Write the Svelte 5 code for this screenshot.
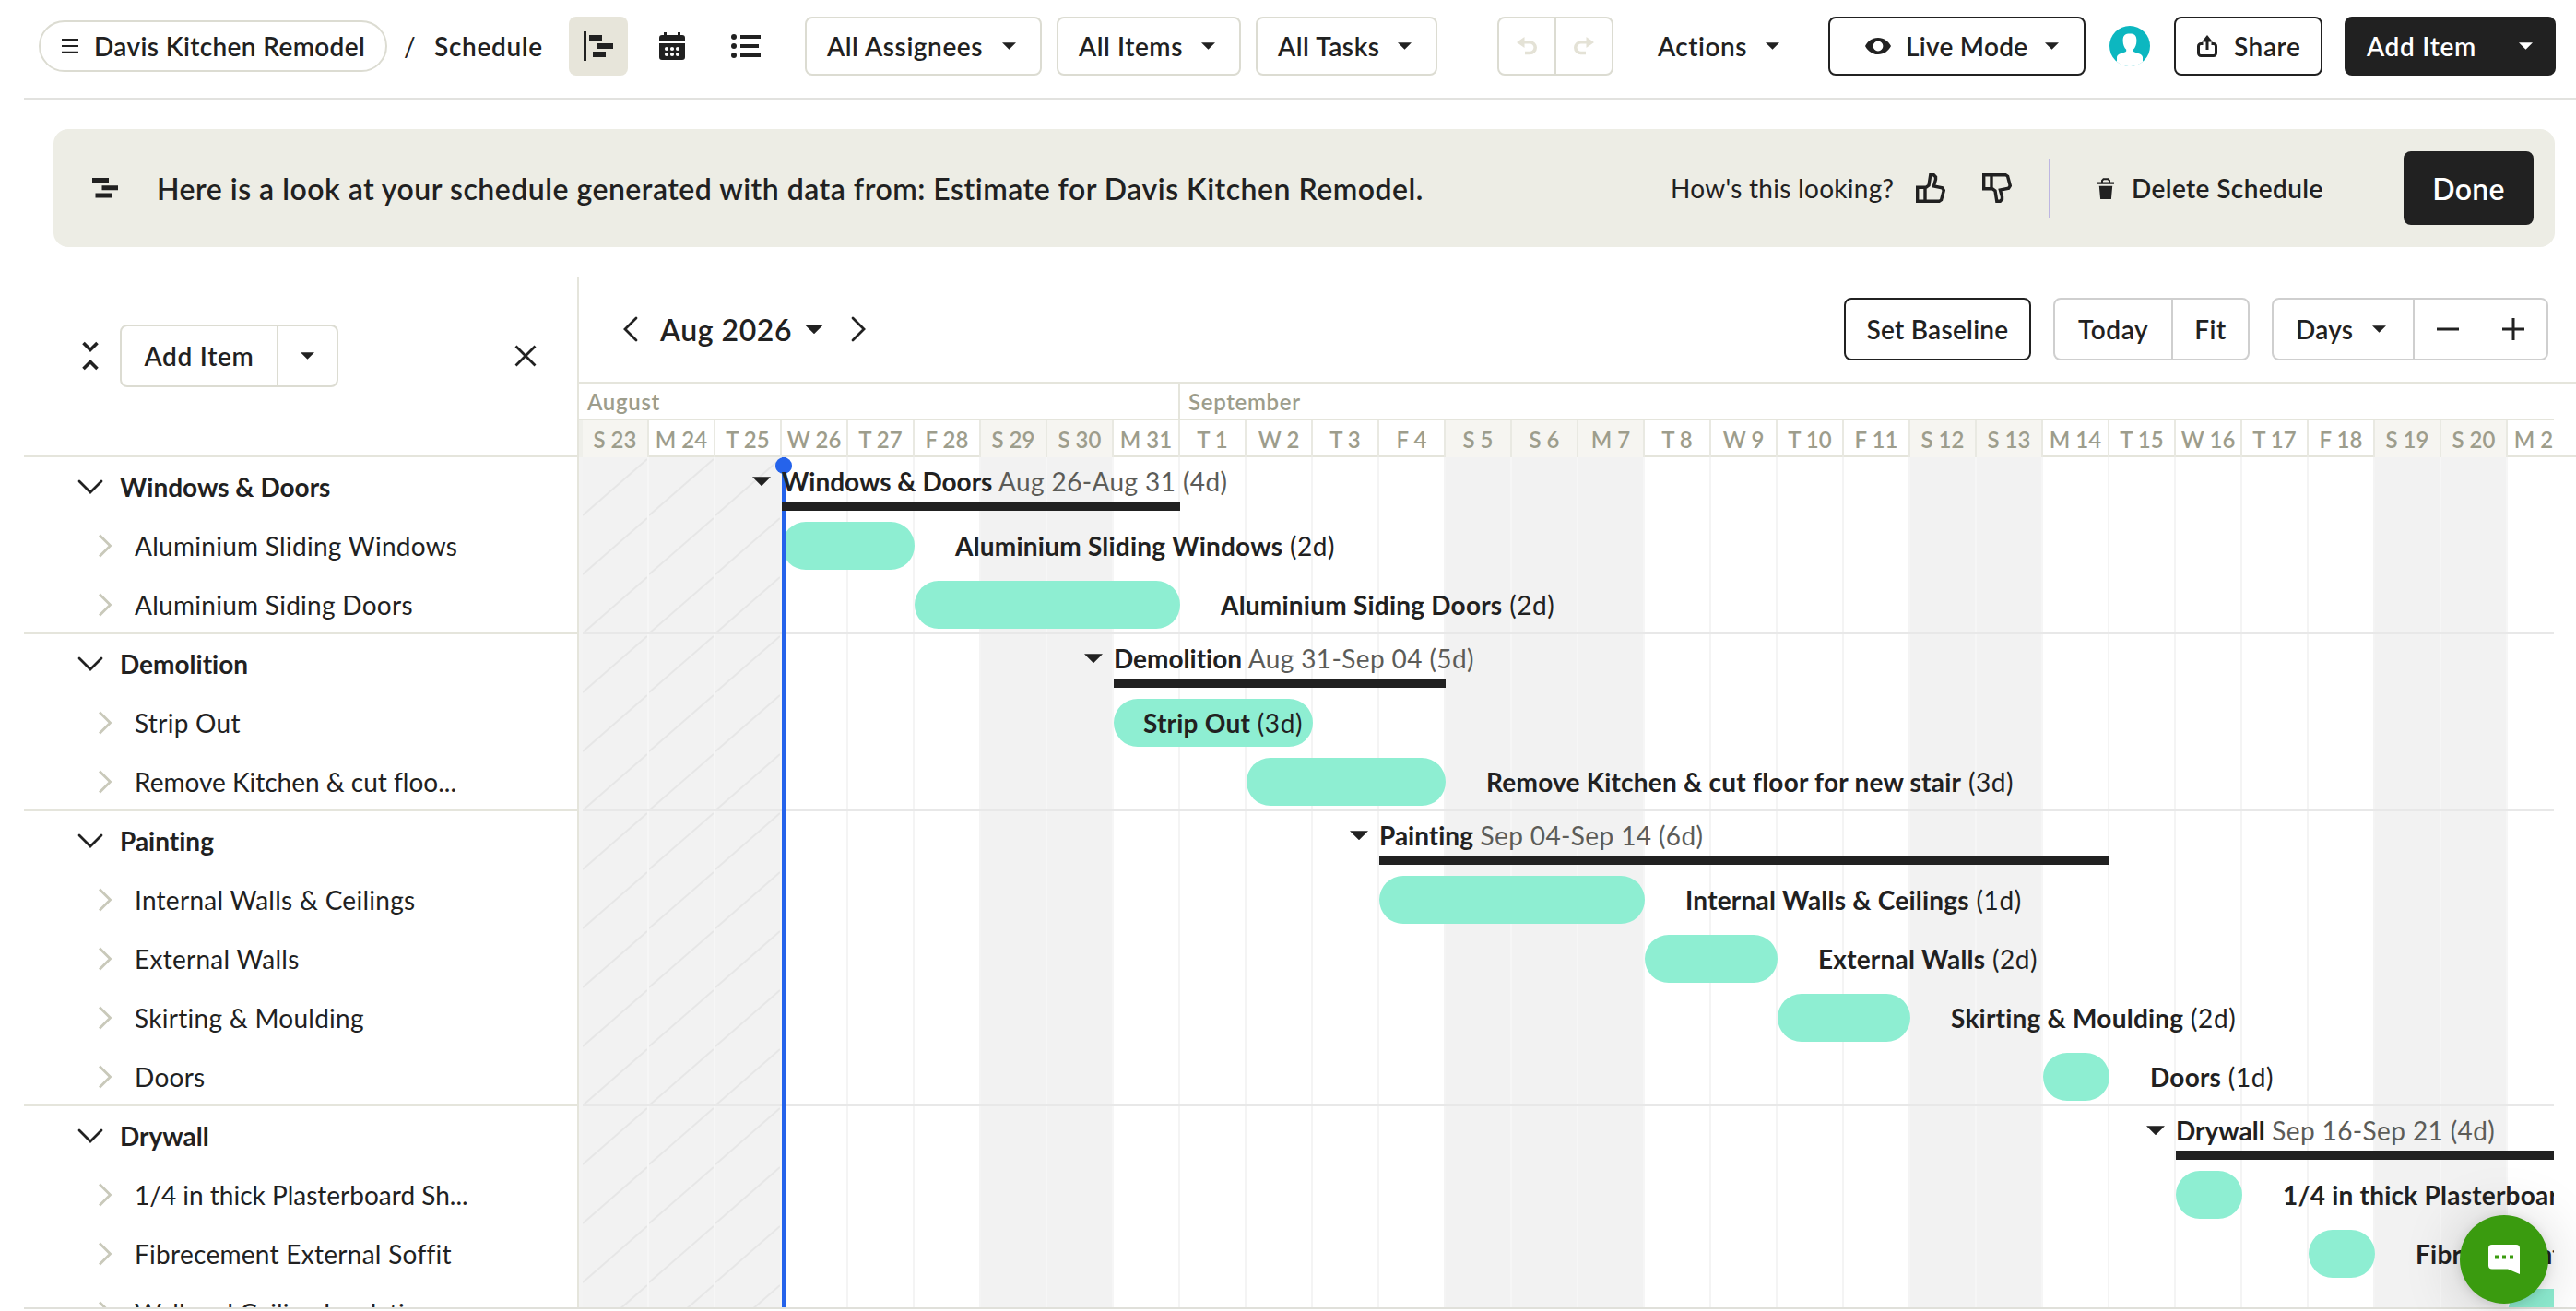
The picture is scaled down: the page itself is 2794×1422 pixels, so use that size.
<script lang="ts">
  type Task = { name: string; short?: string; start: number; end: number; days: number; inside?: boolean };
  type Group = { name: string; range: string; start: number; end: number; tasks: Task[] };

  const DAY = 72;

  // start / end are column indexes, counted from Sunday Aug 23
  const groups: Group[] = [
    {
      name: "Windows & Doors",
      range: "Aug 26-Aug 31 (4d)",
      start: 3,
      end: 9,
      tasks: [
        { name: "Aluminium Sliding Windows", start: 3, end: 5, days: 2 },
        { name: "Aluminium Siding Doors", start: 5, end: 9, days: 2 },
      ],
    },
    {
      name: "Demolition",
      range: "Aug 31-Sep 04 (5d)",
      start: 8,
      end: 13,
      tasks: [
        { name: "Strip Out", start: 8, end: 11, days: 3, inside: true },
        {
          name: "Remove Kitchen & cut floor for new stair",
          short: "Remove Kitchen & cut floo...",
          start: 10,
          end: 13,
          days: 3,
        },
      ],
    },
    {
      name: "Painting",
      range: "Sep 04-Sep 14 (6d)",
      start: 12,
      end: 23,
      tasks: [
        { name: "Internal Walls & Ceilings", start: 12, end: 16, days: 1 },
        { name: "External Walls", start: 16, end: 18, days: 2 },
        { name: "Skirting & Moulding", start: 18, end: 20, days: 2 },
        { name: "Doors", start: 22, end: 23, days: 1 },
      ],
    },
    {
      name: "Drywall",
      range: "Sep 16-Sep 21 (4d)",
      start: 24,
      end: 30,
      tasks: [
        {
          name: "1/4 in thick Plasterboard Sheets",
          short: "1/4 in thick Plasterboard Sh...",
          start: 24,
          end: 25,
          days: 1,
        },
        { name: "Fibrecement External Soffit", start: 26, end: 27, days: 1 },
        {
          name: "Wall and Ceiling Insulation",
          short: "Wall and Ceiling Insulati...",
          start: 29,
          end: 31,
          days: 1,
        },
      ],
    },
  ];

  const todayIndex = 3;
  const daysOff = [0, 6, 7, 13, 14, 15, 20, 21, 27, 28];
  const letters = ["S", "M", "T", "W", "T", "F", "S"];

  const columns = Array.from({ length: 30 }, (_, i) => {
    const date = 23 + i;
    return {
      label: `${letters[i % 7]} ${date > 31 ? date - 31 : date}`,
      off: daysOff.includes(i),
      past: i < todayIndex,
    };
  });

  const filters = [
    { label: "All Assignees", width: 257 },
    { label: "All Items", width: 200 },
    { label: "All Tasks", width: 197 },
  ];
</script>

{#snippet caret(size = 15)}
  <svg class="caret" width={size} height={size / 2 + 0.5} viewBox="0 0 16 8"><path d="M0 0h16L8 8z" fill="currentColor" /></svg>
{/snippet}

<div class="app">
  <header class="topbar">
    <button class="project">
      <svg width="18" height="16" viewBox="0 0 18 16"><path d="M0 1.2h18M0 8h18M0 14.8h18" stroke="currentColor" stroke-width="2.2" /></svg>
      <span>Davis Kitchen Remodel</span>
    </button>
    <span class="slash">/</span>
    <span class="crumb">Schedule</span>

    <div class="views">
      <button class="view active" aria-label="Gantt">
        <svg width="32" height="32" viewBox="0 0 32 32" fill="currentColor">
          <path d="M0 0h3v32H0zM6 4h14v6H6zM14 13h18v6H14zM10 22h14v6H10z" />
        </svg>
      </button>
      <button class="view" aria-label="Calendar">
        <svg width="28" height="30" viewBox="0 0 28 30">
          <path fill="currentColor" d="M5 0h3v3h12V0h3v3h2a3 3 0 0 1 3 3v3H0V6a3 3 0 0 1 3-3h2zM0 12h28v15a3 3 0 0 1-3 3H3a3 3 0 0 1-3-3z" />
          <g fill="#fff">
            {#each [8, 14, 20] as cx}
              <circle {cx} cy="18" r="2.1" /><circle {cx} cy="24" r="2.1" />
            {/each}
          </g>
        </svg>
      </button>
      <button class="view" aria-label="List">
        <svg width="32" height="28" viewBox="0 0 32 28" fill="currentColor">
          <circle cx="3" cy="4" r="3" /><circle cx="3" cy="14" r="3" /><circle cx="3" cy="24" r="3" />
          <path d="M10 2h22v4H10zM10 12h20v4H10zM10 22h22v4H10z" />
        </svg>
      </button>
    </div>

    <div class="filters">
      {#each filters as f}
        <button class="btn filter" style="width: {f.width}px">{f.label}{@render caret()}</button>
      {/each}
    </div>

    <div class="split history">
      <button aria-label="Undo">
        <svg width="22" height="20" viewBox="0 0 22 20"><path d="M0 6 8.500 0v4.200h6a7.500 7.500 0 0 1 0 15H9v-3.400h5.200a4.200 4.200 0 0 0 0-8.400H8.500V12z" fill="currentColor" /></svg>
      </button>
      <button aria-label="Redo">
        <svg width="22" height="20" viewBox="0 0 22 20"><path d="M22 6 13.500 0v4.200h-6a7.500 7.500 0 0 0 0 15H13v-3.400H7.800a4.200 4.200 0 0 1 0-8.400h5.700V12z" fill="currentColor" /></svg>
      </button>
    </div>

    <button class="actions">Actions{@render caret()}</button>

    <button class="btn dark-line live">
      <svg width="28" height="18" viewBox="0 0 28 18">
        <path fill="currentColor" fill-rule="evenodd" d="M14 0c6.500 0 11.500 4 14 9-2.500 5-7.500 9-14 9S2.500 14 0 9C2.500 4 7.500 0 14 0zm0 3.600a5.400 5.400 0 1 0 0 10.800 5.400 5.400 0 0 0 0-10.800z" />
      </svg>
      <span>Live Mode</span>
      {@render caret()}
    </button>

    <svg class="avatar" width="44" height="44" viewBox="0 0 44 44">
      <circle cx="22" cy="22" r="22" fill="#0cb7c0" />
      <path fill="#fff" d="M22 8.500c4.800 0 7.600 1.800 7.400 8-.1 4.400-1.600 7.400-3.600 9.300v1.600c1 2 10.200 2.200 10.200 6.600v5a22 22 0 0 1-28 0v-5c0-4.400 9.200-4.600 10.200-6.600v-1.600c-2-1.900-3.500-4.900-3.600-9.300-.2-6.200 2.600-8 7.400-8z" />
    </svg>

    <button class="btn dark-line share">
      <svg width="22" height="24" viewBox="0 0 22 24">
        <path d="M6.500 9.500H4.200A2.700 2.700 0 0 0 1.500 12.200v7.600a2.700 2.700 0 0 0 2.700 2.700h13.600a2.700 2.700 0 0 0 2.700-2.700v-7.600a2.700 2.700 0 0 0-2.700-2.700h-2.300M11 16V5" fill="none" stroke="currentColor" stroke-width="3" />
        <path d="M11 0l6 7.500H5z" fill="currentColor" />
      </svg>
      <span>Share</span>
    </button>

    <button class="btn solid add">Add Item{@render caret()}</button>
  </header>

  <section class="banner">
    <svg width="28" height="22" viewBox="0 0 28 22" fill="currentColor"><path d="M0 0h18v5H0zM10.500 8.300H28v5H10.500zM3.500 16.500h18v5h-18z" /></svg>
    <p>Here is a look at your schedule generated with data from: Estimate for Davis Kitchen Remodel.</p>
    <span class="question">How's this looking?</span>
    <button class="thumb" aria-label="Looks good">
      <svg width="32" height="32" viewBox="0 0 32 32" fill="none" stroke="currentColor" stroke-width="3.400">
        <path d="M9.800 16.200 14 13 15.800 1.700h3.600L21.500 4v2.600L19.400 14l9.200 1.800 1.700 2.700-2.700 10.300-2.300 1.500H1.700V15.200h8.300v15.100" />
      </svg>
    </button>
    <button class="thumb down" aria-label="Looks wrong">
      <svg width="32" height="32" viewBox="0 0 32 32" fill="none" stroke="currentColor" stroke-width="3.400">
        <path d="M9.800 15.800 14 19l1.800 11.300h3.600L21.500 28v-2.600L19.400 18l9.200-1.800 1.700-2.700-2.700-10.300-2.300-1.500H1.700v15.100h8.300V1.700" />
      </svg>
    </button>
    <div class="rule"></div>
    <button class="delete">
      <svg width="18" height="23" viewBox="0 0 18 23">
        <path d="M0 4.500h18v2.200H0zM1.800 8.800h14.400L14.900 23H3.100z" fill="currentColor" />
        <path d="M5 5V2.800L6.500 1.200h5L13 2.800V5" fill="none" stroke="currentColor" stroke-width="2" />
      </svg>
      <span>Delete Schedule</span>
    </button>
    <button class="btn solid done">Done</button>
  </section>

  <main>
    <aside>
      <div class="side-head">
        <svg width="18" height="32" viewBox="0 0 18 32" fill="none" stroke="currentColor" stroke-width="3.600">
          <path d="M1.500 2 9 9.500 16.500 2M1.500 30 9 22.500l7.500 7.500" />
        </svg>
        <div class="split side-add">
          <button class="wide">Add Item</button>
          <button aria-label="More add options">{@render caret()}</button>
        </div>
        <button class="close" aria-label="Close panel">
          <svg width="24" height="24" viewBox="0 0 24 24"><path d="m1.500 1.500 21 21m0-21-21 21" stroke="currentColor" stroke-width="2.800" /></svg>
        </button>
      </div>
      {#each groups as g}
        <div class="side-group">
          <div class="side-row title">
            <svg width="28" height="16" viewBox="0 0 28 16"><path d="m2 2 12 12L26 2" fill="none" stroke="currentColor" stroke-width="2.800" stroke-linecap="round" /></svg>
            {g.name}
          </div>
          {#each g.tasks as t}
            <div class="side-row" class:tight={t.short}>
              <svg width="16" height="26" viewBox="0 0 16 26"><path d="m2 1.500 11.500 11.500L2 24.500" fill="none" stroke="#c9c9ba" stroke-width="2.800" /></svg>
              {t.short ?? t.name}
            </div>
          {/each}
        </div>
      {/each}
    </aside>

    <div class="chart">
      <div class="toolbar">
        <button class="nav" aria-label="Previous month">
          <svg width="16" height="28" viewBox="0 0 16 28"><path d="M14 2 2 14l12 12" fill="none" stroke="currentColor" stroke-width="2.800" stroke-linecap="round" /></svg>
        </button>
        <button class="month">Aug 2026{@render caret(20)}</button>
        <button class="nav" aria-label="Next month">
          <svg width="16" height="28" viewBox="0 0 16 28"><path d="m2 2 12 12L2 26" fill="none" stroke="currentColor" stroke-width="2.800" stroke-linecap="round" /></svg>
        </button>
        <button class="btn dark-line baseline">Set Baseline</button>
        <div class="split gray range">
          <button class="today">Today</button>
          <button>Fit</button>
        </div>
        <div class="split gray zoom">
          <button class="unit">Days{@render caret()}</button>
          <div class="steps">
            <svg width="24" height="24" viewBox="0 0 24 24"><path d="M0 12h24" stroke="currentColor" stroke-width="3" /></svg>
            <svg width="24" height="24" viewBox="0 0 24 24"><path d="M0 12h24M12 0v24" stroke="currentColor" stroke-width="3" /></svg>
          </div>
        </div>
      </div>

      <div class="months">
        <div class="month-cell first">August</div>
        <div class="month-cell">September</div>
      </div>
      <div class="days">
        <div class="clip">
          {#each columns as c}
            <div class="day" class:off={c.off}>{c.label}</div>
          {/each}
        </div>
      </div>

      <div class="canvas">
        <div class="grid">
          {#each columns as c}
            <div class="col" class:off={c.off || c.past}>
              {#if c.past}
                <svg width="70" height="922">
                  {#each Array.from({ length: 15 }, (_, r) => r * 64) as y}
                    <path d="M0 {y + 63} 70 {y + 2}" stroke="#e6e6e6" stroke-width="2" />
                  {/each}
                </svg>
              {/if}
            </div>
          {/each}
        </div>
        <div class="now" style="left: {4 + todayIndex * DAY}px"></div>

        {#each groups as g}
          <div class="group">
            <div class="row summary">
              <div class="caption" style="margin-left: {g.start * DAY - 32}px">
                {@render caret(20)}
                <span><b>{g.name}</b> {g.range}</span>
              </div>
              <div class="span" style="margin-left: {g.start * DAY}px; width: {(g.end - g.start) * DAY}px"></div>
            </div>
            {#each g.tasks as t}
              <div class="row">
                <div class="bar" style="margin-left: {t.start * DAY}px; width: {(t.end - t.start) * DAY}px">
                  {#if t.inside}<b>{t.name}</b>&nbsp;({t.days}d){/if}
                </div>
                {#if !t.inside}
                  <span class="label"><b>{t.name}</b> ({t.days}d)</span>
                {/if}
              </div>
            {/each}
          </div>
        {/each}
      </div>
    </div>
  </main>

  <button class="chat" aria-label="Open chat">
    <svg width="34" height="32" viewBox="0 0 34 32">
      <path d="M4 0h26a4 4 0 0 1 4 4v28l-13-5.500H4a4 4 0 0 1-4-4V4a4 4 0 0 1 4-4z" fill="#fff" />
      <path d="M7 11.500h4v4H7zM15 11.500h4v4h-4zM23 11.500h4v4h-4z" fill="#3a9b0f" />
    </svg>
  </button>
</div>

<style>
  :global(body) {
    margin: 0;
    background: #fff;
  }

  .app {
    position: relative;
    display: flex;
    flex-direction: column;
    width: 2794px;
    height: 1422px;
    overflow: hidden;
    box-sizing: border-box;
    font-family: Lato, "Open Sans", sans-serif;
    font-size: 28px;
    font-variant-ligatures: none;
    letter-spacing: 0.01em;
    color: #212121;
  }

  .app :global(*) {
    box-sizing: border-box;
  }

  svg {
    display: block;
    flex-shrink: 0;
  }

  b {
    font-weight: 700;
    letter-spacing: 0.008em;
  }

  button {
    display: flex;
    align-items: center;
    margin: 0;
    padding: 0;
    border: none;
    background: none;
    font: inherit;
    font-weight: 600;
    letter-spacing: inherit;
    color: inherit;
    text-align: left;
    white-space: nowrap;
    flex-shrink: 0;
    cursor: pointer;
  }

  /* top bar */
  .topbar {
    display: flex;
    align-items: center;
    flex-shrink: 0;
    height: 108px;
    margin-left: 26px;
    padding: 0 22px 6px 16px;
    border-bottom: 2px solid #e2e2df;
    font-weight: 600;
  }

  .project {
    width: 378px;
    height: 56px;
    padding-left: 23px;
    gap: 17px;
    border: 2px solid #dcdcd2;
    border-radius: 28px;
    letter-spacing: 0.013em;
  }

  .slash {
    width: 51px;
    padding-left: 18px;
    font-weight: 400;
  }

  .crumb {
    width: 146px;
    letter-spacing: 0.024em;
  }

  .views {
    display: flex;
    gap: 16px;
  }

  .view {
    justify-content: center;
    width: 64px;
    height: 64px;
    border-radius: 8px;
  }

  .view.active {
    background: #e7e5da;
  }

  .filters {
    display: flex;
    gap: 16px;
    margin-left: 32px;
    letter-spacing: 0.02em;
  }

  .btn {
    height: 64px;
    border: 2px solid #dcdcd2;
    border-radius: 8px;
  }

  .filter {
    justify-content: space-between;
    padding: 0 26px 0 22px;
  }

  .split {
    display: flex;
    border: 2px solid #dcdcd2;
    border-radius: 8px;
  }

  .split button {
    justify-content: center;
  }

  .split button:first-child {
    border-right: 2px solid #dcdcd2;
  }

  .history {
    width: 126px;
    height: 64px;
    margin-left: 65px;
    color: #e4e2d6;
  }

  .history button {
    flex: 1;
  }

  .actions {
    width: 132px;
    margin-left: 48px;
    justify-content: space-between;
    letter-spacing: 0.018em;
  }

  .dark-line {
    border-color: #212121;
  }

  .live {
    width: 279px;
    margin-left: 53px;
    padding: 0 27px 0 38px;
  }

  .live span {
    flex: 1;
    margin-left: 16px;
  }

  .avatar {
    margin: 0 26px;
  }

  .share {
    width: 161px;
    padding-left: 23px;
    gap: 18px;
    letter-spacing: 0.02em;
  }

  .solid {
    background: #212121;
    border-color: #212121;
    color: #fff;
  }

  .add {
    width: 229px;
    margin-left: 24px;
    padding: 0 23px 0 22px;
    justify-content: space-between;
    letter-spacing: 0.025em;
  }

  /* banner */
  .banner {
    display: flex;
    align-items: center;
    flex-shrink: 0;
    height: 128px;
    margin: 32px 23px 32px 58px;
    padding: 0 23px 0 42px;
    border-radius: 16px;
    background: #edede5;
  }

  .banner p {
    flex: 1;
    margin: 0 0 0 42px;
    font-size: 32px;
    font-weight: 600;
    letter-spacing: 0.5px;
    white-space: nowrap;
  }

  .question {
    width: 266px;
    white-space: nowrap;
  }

  .down {
    margin-left: 40px;
  }

  .rule {
    width: 2px;
    height: 64px;
    margin: 0 51px 0 40px;
    background: #bdb6e2;
  }

  .delete {
    width: 332px;
    gap: 19px;
    letter-spacing: 0.014em;
  }

  .done {
    width: 141px;
    height: 80px;
    justify-content: center;
    font-size: 32px;
  }

  /* item list */
  main {
    display: flex;
    height: 1120px;
    margin-left: 26px;
    overflow: hidden;
    flex-shrink: 0;
    border-bottom: 2px solid #e0e0da;
  }

  aside {
    width: 602px;
    flex-shrink: 0;
    border-right: 2px solid #e5e5dc;
  }

  .side-head {
    display: flex;
    align-items: center;
    height: 196px;
    padding: 0 44px 22px 63px;
    border-bottom: 2px solid #e5e5dc;
  }

  .side-add {
    width: 237px;
    height: 68px;
    margin: 0 auto 0 23px;
    letter-spacing: 0.025em;
  }

  .side-add button {
    flex: 1;
  }

  .side-add .wide {
    flex: none;
    width: 170px;
  }

  .side-group {
    box-shadow: inset 0 -2px #e5e5dc;
  }

  .side-row {
    display: flex;
    align-items: center;
    gap: 24px;
    height: 64px;
    padding-left: 80px;
    white-space: nowrap;
  }

  .side-row.tight {
    letter-spacing: 0;
  }

  .side-row.title {
    gap: 18px;
    padding-left: 58px;
    font-weight: 700;
    letter-spacing: 0;
  }

  /* chart */
  .chart {
    flex: 1;
    min-width: 0;
    display: flex;
    flex-direction: column;
  }

  .toolbar {
    display: flex;
    align-items: center;
    flex-shrink: 0;
    height: 116px;
    padding: 0 30px 0 48px;
    border-bottom: 2px solid #e5e5dc;
  }

  .month {
    justify-content: space-between;
    width: 177px;
    margin: 0 30px 0 24px;
    font-size: 32px;
    letter-spacing: 0.018em;
  }

  .baseline {
    justify-content: center;
    width: 203px;
    height: 68px;
    margin-left: auto;
  }

  .gray,
  .gray.split button:first-child {
    border-color: #cfcfcf;
  }

  .range,
  .zoom {
    height: 68px;
    margin-left: 24px;
  }

  .range {
    width: 213px;
    letter-spacing: 0.02em;
  }

  .range button {
    flex: 1;
  }

  .range .today {
    flex: none;
    width: 128px;
  }

  .zoom {
    width: 300px;
  }

  .zoom .unit {
    width: 153px;
    padding: 0 29px 0 24px;
    justify-content: space-between;
  }

  .steps {
    flex: 1;
    display: flex;
    align-items: center;
    justify-content: space-between;
    padding: 0 24px;
  }

  .months {
    display: flex;
    height: 40px;
    width: 2142px;
    flex-shrink: 0;
    border-bottom: 2px solid #e5e5dc;
    font-size: 24px;
    letter-spacing: 0.028em;
    font-weight: 600;
    color: #9d9d8c;
  }

  .month-cell {
    display: flex;
    align-items: center;
    padding-left: 9px;
  }

  .month-cell.first {
    width: 652px;
    border-right: 2px solid #e5e5dc;
  }

  .days {
    height: 40px;
    flex-shrink: 0;
    background: linear-gradient(#e5e5dc, #e5e5dc) bottom / 100% 2px no-repeat;
  }

  .clip {
    display: flex;
    width: 2142px;
    height: 40px;
    padding-left: 4px;
    overflow: hidden;
    box-shadow: inset 4px 0 #efefea;
  }

  .day {
    display: flex;
    align-items: center;
    justify-content: center;
    flex: none;
    width: 72px;
    border-right: 2px solid #e9e9e2;
    font-size: 24px;
    font-weight: 600;
    letter-spacing: 0;
    color: #9d9d8c;
    white-space: nowrap;
  }

  .day.off {
    background: #f6f5f1;
  }

  .canvas {
    position: relative;
    width: 2142px;
    height: 922px;
    padding-left: 4px;
    overflow: hidden;
  }

  .grid {
    position: absolute;
    inset: 0;
    display: flex;
    padding-left: 4px;
    box-shadow: inset 4px 0 #f3f3f3;
  }

  .col {
    flex: none;
    width: 72px;
    border-right: 2px solid #f4f4f4;
  }

  .col.off {
    background: #f2f2f2;
    border-color: #f6f6f6;
  }

  /* the marker stays above task bars but below summary lines */
  .now {
    position: absolute;
    top: 0;
    z-index: 1;
    width: 4px;
    height: 100%;
    background: #2563eb;
  }

  .now::before {
    content: "";
    position: absolute;
    left: -7px;
    top: 0;
    width: 18px;
    height: 18px;
    border-radius: 50%;
    background: #2563eb;
  }

  .group {
    position: relative;
    width: 2400px;
    box-shadow: inset 0 -2px #e8e8e8;
  }

  .row {
    display: flex;
    align-items: center;
    height: 64px;
    letter-spacing: 0.02em;
    white-space: nowrap;
  }

  .row.summary {
    position: relative;
    z-index: 2;
    display: block;
    padding-top: 4px;
  }

  .caption {
    display: flex;
    align-items: center;
    gap: 12px;
    height: 44px;
    letter-spacing: 0.014em;
    color: #5c5c58;
  }

  .caption b {
    letter-spacing: 0;
  }

  .caption b,
  .caption :global(.caret) {
    color: #212121;
  }

  .span {
    height: 10px;
    background: #212121;
  }

  .bar {
    flex: none;
    display: flex;
    align-items: center;
    height: 52px;
    padding-left: 32px;
    border-radius: 26px;
    background: #8eeed2;
  }

  .label {
    margin-left: 44px;
  }

  .chat {
    position: absolute;
    right: 30px;
    bottom: 8px;
    z-index: 3;
    justify-content: center;
    width: 96px;
    height: 96px;
    border-radius: 50%;
    background: #3a9b0f;
    box-shadow: 0 4px 64px rgba(0, 0, 0, 0.18), 0 2px 12px rgba(0, 0, 0, 0.12);
  }
</style>
